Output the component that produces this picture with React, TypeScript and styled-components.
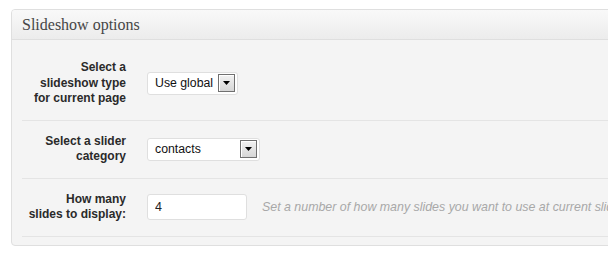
import styled, { createGlobalStyle } from 'styled-components'

const GlobalStyle = createGlobalStyle`
  html, body {
    margin: 0;
    padding: 0;
    background: #ffffff;
    overflow: hidden;
  }
  body {
    font-family: Arial, "Liberation Sans", sans-serif;
  }
`

type Option = { label: string; width: number }

const rows = [
  { label: ['Select a', 'slideshow type', 'for current page'], select: { label: 'Use global', width: 91 } as Option },
  { label: ['Select a slider', 'category'], select: { label: 'contacts', width: 113 } as Option },
]

export default function App() {
  return (
    <Page>
      <GlobalStyle />
      <Panel>
        <Header>
          <Title>Slideshow options</Title>
        </Header>
        <Body>
          {rows.map((row) => (
            <Row key={row.select.label}>
              <Label>
                {row.label.map((line) => (
                  <span key={line}>{line}</span>
                ))}
              </Label>
              <SelectBox $width={row.select.width}>
                <SelectText>{row.select.label}</SelectText>
                <ArrowButton>
                  <svg width="7" height="4" viewBox="0 0 7 4">
                    <path d="M0 0h7L3.5 4z" fill="#000" />
                  </svg>
                </ArrowButton>
              </SelectBox>
            </Row>
          ))}
          <Row>
            <Label>
              <span>How many</span>
              <span>slides to display:</span>
            </Label>
            <TextInput defaultValue="4" />
            <Hint>Set a number of how many slides you want to use at current slider</Hint>
          </Row>
        </Body>
      </Panel>
    </Page>
  )
}

const Page = styled.div`
  padding: 9px 0 0 11px;
  width: 700px;
`

const Panel = styled.div`
  width: 660px;
  border: 1px solid #dfdfdf;
  border-radius: 4px;
  background: #f4f4f4;
  overflow: hidden;
`

const Header = styled.div`
  height: 29px;
  display: flex;
  align-items: center;
  padding-left: 10px;
  background: linear-gradient(to bottom, #f9f9f9, #ececec);
  border-bottom: 1px solid #dfdfdf;
`

const Title = styled.h3`
  margin: 0;
  font-family: "Liberation Serif", "Times New Roman", serif;
  font-weight: normal;
  font-size: 16px;
  color: #464646;
  padding-top: 1px;
`

const Body = styled.div`
  padding: 7px 0 8px;
`

const Row = styled.div`
  display: flex;
  align-items: center;
  margin-left: 10px;
  padding: 13px 0;
  border-bottom: 1px solid #e4e4e4;
  white-space: nowrap;
`

const Label = styled.div`
  width: 104px;
  flex-shrink: 0;
  margin-right: 21px;
  display: flex;
  flex-direction: column;
  align-items: flex-end;
  font-weight: bold;
  font-size: 12px;
  line-height: 15.5px;
  color: #2a2a2a;
`

const SelectBox = styled.div<{ $width: number }>`
  width: ${(p) => p.$width}px;
  height: 23px;
  box-sizing: border-box;
  display: flex;
  align-items: center;
  justify-content: space-between;
  padding: 0 2px 0 7px;
  background: #ffffff;
  border: 1px solid #dfdfdf;
  border-radius: 3px;
`

const SelectText = styled.span`
  font-size: 12.3px;
  color: #111111;
`

const ArrowButton = styled.span`
  width: 17px;
  height: 18px;
  box-sizing: border-box;
  display: flex;
  align-items: center;
  justify-content: center;
  border: 1px solid #707070;
  box-shadow: inset 1px 1px 0 #ffffff;
  background: linear-gradient(to bottom, #f2f2f2, #d6d6d6);
  margin-bottom: 1px;
`

const TextInput = styled.input`
  width: 100px;
  height: 26px;
  box-sizing: border-box;
  padding: 0 7px;
  font-family: Arial, "Liberation Sans", sans-serif;
  font-size: 12.5px;
  color: #222222;
  background: #ffffff;
  border: 1px solid #dfdfdf;
  border-radius: 3px;
  outline: none;
`

const Hint = styled.span`
  margin-left: 15px;
  font-style: italic;
  font-size: 12.4px;
  color: #a8a8a8;
`
